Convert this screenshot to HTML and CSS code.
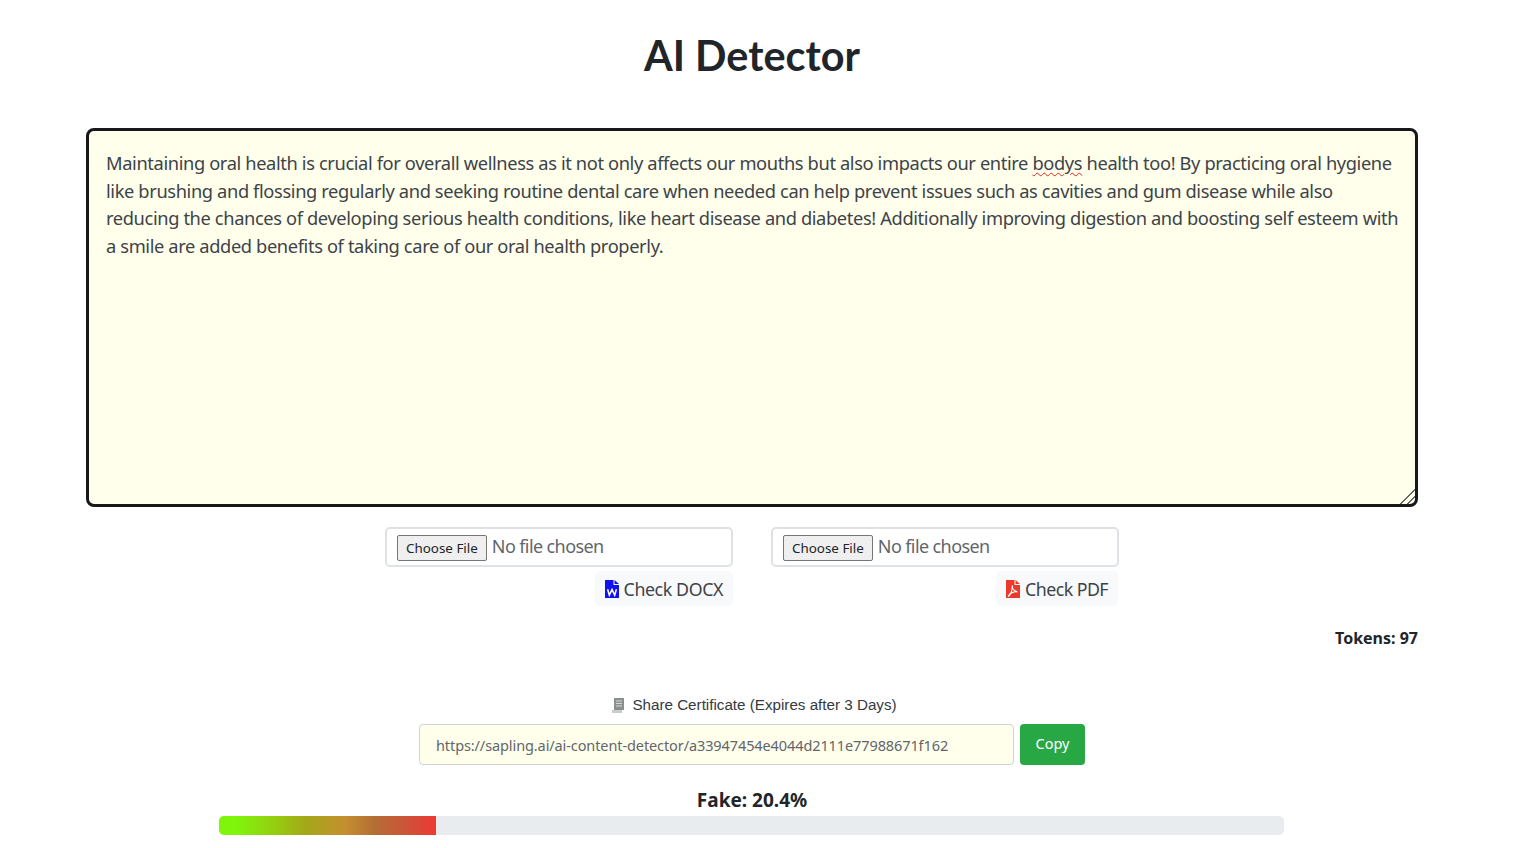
FILE: index.html
```html
<!DOCTYPE html>
<html lang="en">
<head>
<meta charset="utf-8">
<title>AI Detector</title>
<link rel="stylesheet" href="styles.css">
</head>
<body>
<main class="page">
  <h1 class="title">AI Detector</h1>
  <div class="editor">
    <div class="line">Maintaining oral health is crucial for overall wellness as it not only affects our mouths but also impacts our entire <span class="misspelt">bodys</span> health too! By practicing oral hygiene</div>
    <div class="line">like brushing and flossing regularly and seeking routine dental care when needed can help prevent issues such as cavities and gum disease while also</div>
    <div class="line">reducing the chances of developing serious health conditions, like heart disease and diabetes! Additionally improving digestion and boosting self esteem with</div>
    <div class="line">a smile are added benefits of taking care of our oral health properly.</div>
  </div>
  <div class="uploads">
    <div class="upload">
      <input class="file" type="file">
      <button class="check" type="button">
        <svg class="file-icon" viewBox="0 0 14 18" aria-hidden="true"><path fill="#1212f0" d="M0 0h8.500v5H14v13H0z"/><path fill="#1212f0" d="M9.500 0 14 4H9.500z"/><path fill="none" stroke="#fff" stroke-width="1.500" d="M2.600 9.200l1.700 6 2.700-5.600 2.700 5.600 1.700-6"/></svg>
        Check DOCX
      </button>
    </div>
    <div class="upload">
      <input class="file" type="file">
      <button class="check check-pdf" type="button">
        <svg class="file-icon" viewBox="0 0 14 18" aria-hidden="true"><path fill="#ea3a2c" d="M0 0h8.500v5H14v13H0z"/><path fill="#ea3a2c" d="M9.500 0 14 4H9.500z"/><path fill="none" stroke="#fff" stroke-width="1.100" d="M6.400 5.500c-.6 2 .6 5.400 5 6.400-3.500-.5-7.600 1-9 4.300 1.500.2 3.600-4.200 4-10.700z"/></svg>
        Check PDF
      </button>
    </div>
  </div>
  <p class="tokens">Tokens: 97</p>
  <section class="share">
    <p class="share-label">
      <svg class="scroll-icon" viewBox="0 0 12 15" aria-hidden="true"><path fill="#8b8f8e" d="M2 0h10v12H2z"/><path fill="#c9cccb" d="M0 12h10v3H0z"/><path stroke="#d8dad9" d="M4 3h6M4 5.500h6M4 8h6"/></svg>
      Share Certificate (Expires after 3 Days)
    </p>
    <div class="share-row">
      <input class="share-url" type="text" readonly value="https://sapling.ai/ai-content-detector/a33947454e4044d2111e77988671f162">
      <button class="copy" type="button">Copy</button>
    </div>
  </section>
  <section class="result">
    <p class="fake">Fake: 20.4%</p>
    <div class="progress"><div class="progress-bar" style="width:20.4%"></div></div>
  </section>
</main>
</body>
</html>
```
FILE: styles.css
```css
* { box-sizing: border-box; }
html, body { margin: 0; background: #fff; }
body {
  width: 1504px;
  font-family: "Noto Sans", "Open Sans", sans-serif;
  color: #212529;
  overflow: hidden;
}
.page {
  width: 1332px;
  margin: 0 auto;
  display: flex;
  flex-direction: column;
  align-items: stretch;
}
.title {
  margin: 29px 0 47px;
  height: 52px;
  font: 700 41.400px/52px "Lato", sans-serif;
  text-align: center;
  color: #212529;
}
.editor {
  height: 379px;
  padding: 18px 17px;
  border: 3px solid #16181a;
  border-radius: 8px;
  background: #ffffec;
  font-size: 18.300px;
  line-height: 27.660px;
  letter-spacing: -.38px;
  color: #3d4349;
  resize: both;
  overflow: auto;
}
.editor::-webkit-resizer {
  background: linear-gradient(135deg, transparent 50%, #666 50%, #666 56%, transparent 56%, transparent 72%, #666 72%, #666 78%, transparent 78%);
}
.line { white-space: nowrap; }
.misspelt { text-decoration: underline wavy #e0261c 1.300px; text-underline-offset: 2px; }
.uploads {
  display: flex;
  justify-content: center;
  gap: 38px;
  margin-top: 20px;
}
.upload {
  width: 348px;
  display: flex;
  flex-direction: column;
  align-items: flex-end;
  gap: 4px;
}
.file {
  width: 100%;
  height: 40px;
  padding: 5px 10px;
  border: 2px solid #dee2e6;
  border-radius: 5px;
  background: #fff;
  font: 18px "Noto Sans", sans-serif;
  letter-spacing: -.6px;
  color: #5f666c;
}
.file::file-selector-button {
  height: 26px;
  padding: 1px 8px;
  margin-right: 5px;
  border: 1px solid #767676;
  border-radius: 2px;
  background: #efefef;
  color: #212529;
  font: 13.400px "Noto Sans", sans-serif;
  letter-spacing: 0;
}
.check {
  display: flex;
  align-items: center;
  gap: 5px;
  height: 35px;
  padding: 0 10px;
  border: 0;
  border-radius: 5px;
  background: #f8f9fa;
  font: 17.800px "Noto Sans", sans-serif;
  letter-spacing: -.4px;
  color: #3d4349;
}
.check-pdf { letter-spacing: -.55px; margin-right: 1px; }
.file-icon { width: 14px; height: 18px; flex: none; }
.tokens {
  margin: 21px 0 0;
  height: 22px;
  font-weight: 700;
  font-size: 16px;
  line-height: 22px;
  text-align: right;
  color: #212529;
}
.share {
  margin-top: 46px;
  display: flex;
  flex-direction: column;
  align-items: center;
  gap: 9px;
}
.share-label {
  margin: 0 0 0 5px;
  height: 20px;
  display: flex;
  align-items: center;
  gap: 8px;
  font: 15.200px/20px "Liberation Sans", sans-serif;
  color: #343a40;
}
.scroll-icon { width: 12px; height: 15px; }
.share-row {
  display: flex;
  gap: 6px;
  height: 41px;
}
.share-url {
  width: 595px;
  height: 41px;
  padding: 2px 16px;
  border: 1px solid #ced4da;
  border-radius: 4px;
  background: #ffffec;
  font: 14.500px "Noto Sans", sans-serif;
  letter-spacing: -.1px;
  color: #5f666c;
}
.copy {
  width: 65px;
  height: 41px;
  padding: 0 0 4px;
  border: 0;
  border-radius: 4px;
  background: #28a745;
  color: #fff;
  font: 14.500px "Noto Sans", sans-serif;
}
.result {
  margin-top: 23px;
  display: flex;
  flex-direction: column;
  align-items: center;
}
.fake {
  margin: 0 0 4px;
  height: 24px;
  font-weight: 700;
  font-size: 19px;
  line-height: 24px;
}
.progress {
  width: 1065px;
  height: 19px;
  margin-right: 1px;
  border-radius: 5px;
  background: #e9ecef;
  overflow: hidden;
}
.progress-bar {
  height: 100%;
  background: linear-gradient(to right, #7ff50c 0, #7ff50c 8%, #94cf10 25%, #a3a818 40%, #c48f30 58%, #b46d33 72%, #d0503a 88%, #ef3832 100%);
}
```
